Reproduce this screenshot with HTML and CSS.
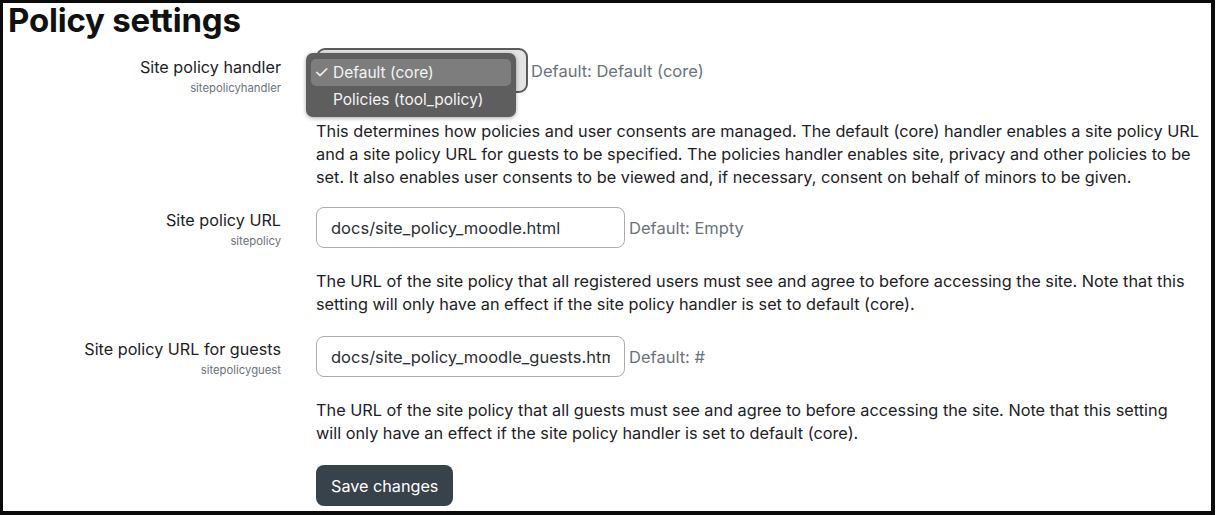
FILE: index.html
```html
<!DOCTYPE html>
<html lang="en">
<head>
<meta charset="utf-8">
<title>Policy settings</title>
<link rel="stylesheet" href="styles.css">
</head>
<body>
<div class="frame">
  <h2 class="title">Policy settings</h2>

  <div class="setting s1">
    <div class="label">
      <div class="name">Site policy handler</div>
      <div class="key">sitepolicyhandler</div>
    </div>
    <div class="control">
      <div class="row">
        <div class="select-wrap">
          <div class="select"></div>
          <div class="menu">
            <div class="opt selected"><span class="check">✓</span>Default (core)</div>
            <div class="opt">Policies (tool_policy)</div>
          </div>
        </div>
        <span class="default">Default: Default (core)</span>
      </div>
      <p class="desc">This determines how policies and user consents are managed. The default (core) handler enables a site policy URL<br>and a site policy URL for guests to be specified. The policies handler enables site, privacy and other policies to be<br>set. It also enables user consents to be viewed and, if necessary, consent on behalf of minors to be given.</p>
    </div>
  </div>

  <div class="setting s2">
    <div class="label">
      <div class="name">Site policy URL</div>
      <div class="key">sitepolicy</div>
    </div>
    <div class="control">
      <div class="row">
        <input class="input" type="text" value="docs/site_policy_moodle.html">
        <span class="default">Default: Empty</span>
      </div>
      <p class="desc">The URL of the site policy that all registered users must see and agree to before accessing the site. Note that this<br>setting will only have an effect if the site policy handler is set to default (core).</p>
    </div>
  </div>

  <div class="setting s3">
    <div class="label">
      <div class="name">Site policy URL for guests</div>
      <div class="key">sitepolicyguest</div>
    </div>
    <div class="control">
      <div class="row">
        <input class="input" type="text" value="docs/site_policy_moodle_guests.html">
        <span class="default">Default: #</span>
      </div>
      <p class="desc">The URL of the site policy that all guests must see and agree to before accessing the site. Note that this setting<br>will only have an effect if the site policy handler is set to default (core).</p>
    </div>
  </div>

  <div class="actions">
    <span class="btn">Save changes</span>
  </div>
</div>
</body>
</html>
```

FILE: styles.css
```css
* { box-sizing: border-box; }
html, body { margin: 0; padding: 0; background: #fff; }
body {
  font-family: "Inter", "Noto Sans", sans-serif;
  color: #1d2125;
  width: 1218px;
  height: 515px;
  overflow: hidden;
}
.frame {
  width: 1215px;
  height: 515px;
  border-style: solid;
  border-color: #0b0b0b;
  border-width: 3px 4px 4px 3px;
  padding: 0 4px 0 5px;
}
.title {
  margin: -2px 0 0 0;
  font-size: 33px;
  line-height: 38px;
  font-weight: 700;
  letter-spacing: -0.2px;
  color: #111;
}
.setting {
  display: grid;
  grid-template-columns: 273px 1fr;
  column-gap: 35px;
}
.s1 { margin-top: 9px; }
.s2 { margin-top: 18.5px; }
.s3 { margin-top: 20.5px; }
.label { text-align: right; padding-top: 1.5px; }
.s1 .label { padding-top: 7.5px; }
.name { font-size: 16.2px; line-height: 23px; color: #1d2125; }
.key { font-size: 11.3px; line-height: 18px; color: #6a737b; }
.row { display: flex; align-items: center; }
.default { font-size: 16.5px; color: #6a737b; margin-left: 4px; }
.s1 .default { margin-left: 3px; }
.desc { margin: 21.5px 0 0 0; font-size: 16.3px; line-height: 23px; white-space: nowrap; }
.s1 .desc { margin-top: 26.5px; }

.select-wrap { position: relative; width: 212px; height: 45px; }
.select {
  width: 212px;
  height: 45px;
  border: 2px solid #5b5b5b;
  border-radius: 9px;
  background: #e4e4e4;
}
.menu {
  position: absolute;
  left: -10px;
  top: 5px;
  width: 210px;
  height: 64px;
  background: #5e5e5e;
  border-radius: 7px;
  padding: 6px 5px 0;
  box-shadow: 0 1px 4px rgba(0,0,0,0.35);
}
.opt {
  font-size: 15.5px;
  line-height: 27px;
  height: 27px;
  color: #f4f4f4;
  padding-left: 22px;
  border-radius: 5px;
  position: relative;
}
.opt.selected { background: #7d7d7d; }
.check { position: absolute; left: 3px; top: 0; font-size: 17px; }

.input {
  width: 309px;
  height: 41px;
  margin: 0;
  border: 1px solid #a9adb2;
  border-radius: 8px;
  padding: 0 14px;
  font-family: "Inter", "Noto Sans", sans-serif;
  font-size: 16.5px;
  color: #2b3035;
  background: #fff;
  outline: none;
}

.actions { margin-top: 20.5px; padding-left: 308px; }
.btn {
  display: inline-flex;
  align-items: center;
  height: 41px;
  padding: 0 15px;
  background: #37424b;
  color: #fff;
  font-size: 16.2px;
  border-radius: 8px;
}
```
